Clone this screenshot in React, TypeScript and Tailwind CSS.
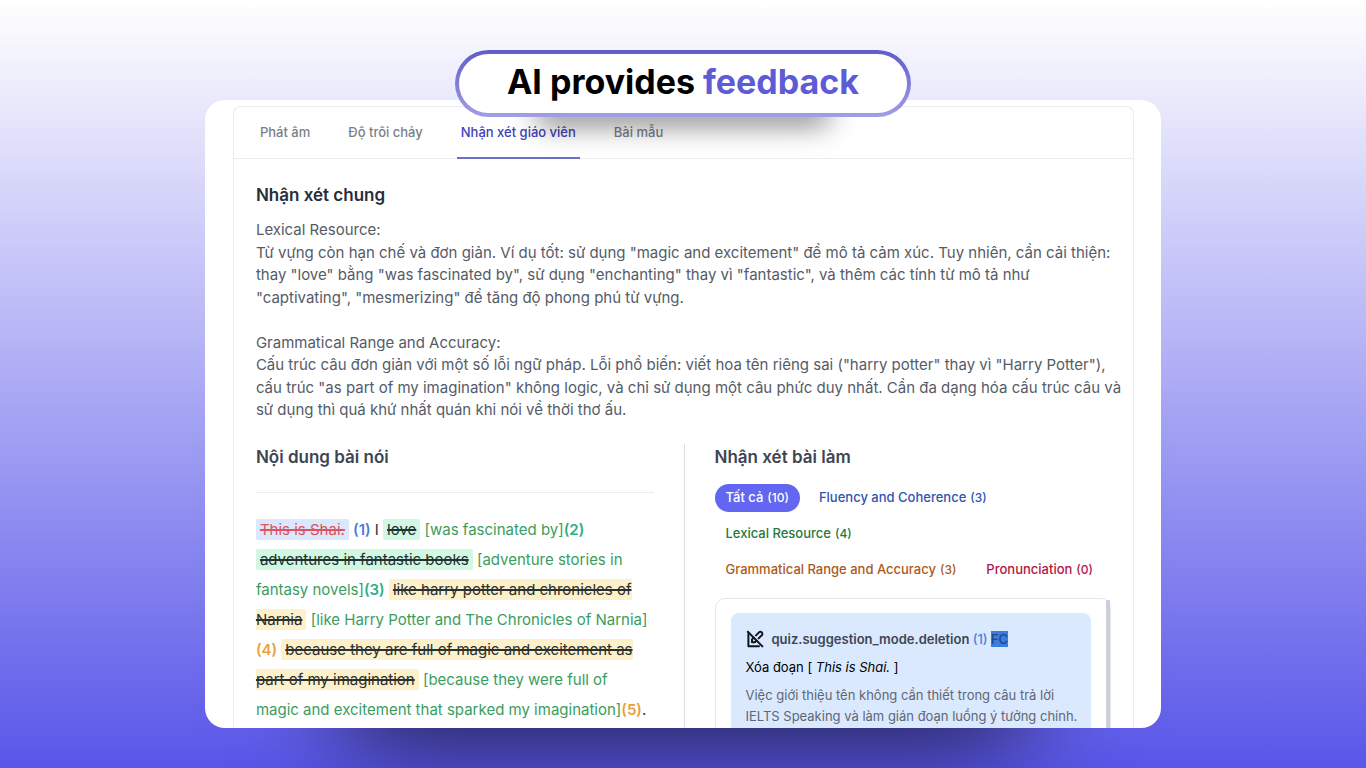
import React, { useState } from "react";

const TABS = ["Phát âm", "Độ trôi chảy", "Nhận xét giáo viên", "Bài mẫu"];

const FILTERS = [
  { id: "all", label: "Tất cả", count: 10, color: "text-[#4b5563]" },
  { id: "fc", label: "Fluency and Coherence", count: 3, color: "text-[#2f55ae]" },
  { id: "lr", label: "Lexical Resource", count: 4, color: "text-[#257a41]" },
  { id: "gra", label: "Grammatical Range and Accuracy", count: 3, color: "text-[#ab5a1e]" },
  { id: "p", label: "Pronunciation", count: 0, color: "text-[#b31745]" },
];

function EditOffIcon() {
  return (
    <svg
      viewBox="0 0 18 18"
      className="w-[18px] h-[18px] shrink-0 text-[#11151c]"
      fill="none"
      stroke="currentColor"
      strokeWidth="2"
      strokeLinecap="round"
      strokeLinejoin="round"
      aria-hidden="true"
    >
      <path d="M2.4 4v12.2H13" />
      <path d="M1.8 1.8l14.6 14.6" />
      <path d="M7.6 7.6L6 9.4v2.8h2.8l1.8-1.6" />
      <path d="M10 5.4l3-3a1.9 1.9 0 0 1 2.8 2.8l-3.2 3.2" />
    </svg>
  );
}

function Tabs({ active, onChange }: { active: string; onChange: (t: string) => void }) {
  return (
    <div role="tablist" className="flex gap-[30px] px-[22px] h-[52px] shrink-0 border-b border-[#ebebf0]">
      {TABS.map((tab) => (
        <button
          key={tab}
          role="tab"
          aria-selected={tab === active}
          onClick={() => onChange(tab)}
          className={
            tab === active
              ? "px-1 pt-0.5 -mb-px border-b-2 border-[#6d6fc4] text-[13px] font-medium text-[#4340b8]"
              : "px-1 pt-0.5 -mb-px border-b-2 border-transparent text-[13px] font-medium text-[#7b7f88]"
          }
        >
          {tab}
        </button>
      ))}
    </div>
  );
}

/* Trecho original riscado */
function Del({ tone, children }: { tone: "blue" | "green" | "amber"; children: React.ReactNode }) {
  const tones = {
    blue: "bg-[#dbe7fd] text-[#e0525c]",
    green: "bg-[#d2f8e3] text-[#22312f]",
    amber: "bg-[#fcf1cb] text-[#2b2f2e]",
  };
  return <del className={`px-1 py-px rounded-xs line-through decoration-2 ${tones[tone]}`}>{children}</del>;
}

function Ins({ children }: { children: React.ReactNode }) {
  return <ins className="no-underline text-[#3a9d5d]">{children}</ins>;
}

function Transcript() {
  return (
    <p className="text-[15px] leading-[30px] text-[#2b3240]">
      <Del tone="blue">This is Shai.</Del> <span className="font-semibold text-[#4a7fdc]">(1)</span> I{" "}
      <Del tone="green">love</Del> <Ins>[was fascinated by]</Ins>
      <span className="font-semibold text-[#2fae84]">(2)</span>{" "}
      <Del tone="green">adventures in fantastic books</Del>{" "}
      <Ins>[adventure stories in fantasy novels]</Ins>
      <span className="font-semibold text-[#2fae84]">(3)</span>{" "}
      <Del tone="amber">like harry potter and chronicles of Narnia</Del>{" "}
      <Ins>[like Harry Potter and The Chronicles of Narnia]</Ins>
      <wbr />
      <span className="font-semibold text-[#e9a03b]">(4)</span>{" "}
      <Del tone="amber">because they are full of magic and excitement as part of my imagination</Del>{" "}
      <Ins>[because they were full of magic and excitement that sparked my imagination]</Ins>
      <span className="font-semibold text-[#e9a03b]">(5)</span>.
    </p>
  );
}

export default function App() {
  const [tab, setTab] = useState("Nhận xét giáo viên");
  const [filter, setFilter] = useState("all");

  return (
    <div className="h-screen overflow-hidden flex flex-col items-center pt-[50px] pb-10 bg-linear-to-b/srgb from-white to-[#5956e9] font-['Inter',sans-serif]">
      {/* TÍTULO */}
      <div className="relative z-10 shrink-0 -mb-[17px]">
        <div className="absolute inset-x-20 -bottom-2 h-6 rounded-full bg-black/50 blur-[14px]" />
        <div className="relative p-1 rounded-full bg-linear-to-b/srgb from-[#5f5cca] to-[#a29ee6]">
          <h1 className="h-[59px] px-12 pb-1 flex items-center rounded-full bg-white text-[34px] font-bold text-black whitespace-pre">
            AI provides <span className="text-[#5e5bd6]">feedback</span>
          </h1>
        </div>
      </div>

      <main className="w-[70%] flex-1 min-h-0 rounded-[20px] bg-white shadow-[0_150px_100px_-140px_rgba(0,0,0,0.75)]">
        <div className="h-full overflow-hidden rounded-[20px] pl-7 pr-[27px] pt-[6px]">
          <div className="rounded-t-lg border border-b-0 border-[#ebebf0]">
            <Tabs active={tab} onChange={setTab} />

            <div className="px-[22px] pt-6">
              <h2 className="text-[17px] leading-6 font-semibold text-[#262d3b]">Nhận xét chung</h2>
              <div className="mt-3 -mr-3 text-[15px] leading-normal text-[#555b67]">
                <p>Lexical Resource:</p>
                <p>
                  Từ vựng còn hạn chế và đơn giản. Ví dụ tốt: sử dụng "magic and excitement" để mô tả cảm xúc. Tuy
                  nhiên, cần cải thiện: thay "love" bằng "was fascinated by", sử dụng "enchanting" thay vì
                  "fantastic", và thêm các tính từ mô tả như
                  <br />
                  "captivating", "mesmerizing" để tăng độ phong phú từ vựng.
                </p>
                <br />
                <p>Grammatical Range and Accuracy:</p>
                <p>
                  Cấu trúc câu đơn giản với một số lỗi ngữ pháp. Lỗi phổ biến: viết hoa tên riêng sai ("harry potter"
                  thay vì "Harry Potter"), cấu trúc "as part of my imagination" không logic, và chỉ sử dụng một câu
                  phức duy nhất. Cần đa dạng hóa cấu trúc câu và sử dụng thì quá khứ nhất quán khi nói về thời thơ ấu.
                </p>
              </div>

              <div className="mt-[22px] grid grid-cols-2">
                {/* NỘI DUNG BÀI NÓI */}
                <section className="pr-[30px]">
                  <h2 className="text-[17px] leading-[26px] font-semibold text-[#3d4452]">Nội dung bài nói</h2>
                  <hr className="mt-[22px] mb-[22px] border-[#ececef]" />
                  <Transcript />
                </section>

                {/* NHẬN XÉT BÀI LÀM */}
                <section className="pl-[30px] border-l border-[#dcdde2]">
                  <h2 className="text-[17px] leading-[26px] font-semibold text-[#3d4452]">Nhận xét bài làm</h2>
                  <div className="mt-[14px] flex flex-wrap gap-x-2 gap-y-2">
                    {FILTERS.map((f) => (
                      <button
                        key={f.id}
                        onClick={() => setFilter(f.id)}
                        className={`h-7 px-[11px] rounded-full flex items-center gap-1 text-[13px] font-medium ${
                          f.id === filter ? "bg-[#6366f1] text-white" : f.color
                        }`}
                      >
                        {f.label}
                        <span className="text-xs">({f.count})</span>
                      </button>
                    ))}
                  </div>

                  <div className="mt-[14px] h-[420px] flex justify-between rounded-[10px] border border-[#e6e7ec]">
                    <article className="flex-1 mx-[15px] mt-[14px] pl-[15px] pr-2 pt-4 rounded-lg bg-[#dbe9fe]">
                      <h3 className="flex items-center gap-2 text-[13px] leading-5 font-semibold text-[#3d4654]">
                        <EditOffIcon />
                        <span>
                          quiz.suggestion_mode.deletion <span className="font-medium text-[#4a7fdc]">(1)</span>{" "}
                          <span className="bg-[#3b7ddd] font-medium text-[#1f4588]">FC</span>
                        </span>
                      </h3>
                      <p className="mt-2 text-[13px] leading-5 text-black">
                        Xóa đoạn [ <em>This is Shai.</em> ]
                      </p>
                      <p className="mt-2 text-[13px] leading-[21px] text-[#5d6775]">
                        Việc giới thiệu tên không cần thiết trong câu trả lời IELTS Speaking và làm gián đoạn luồng ý
                        tưởng chính.
                      </p>
                    </article>
                    <div className="w-1 mt-px bg-[#cbd0dc]" />
                  </div>
                </section>
              </div>
            </div>
          </div>
        </div>
      </main>
    </div>
  );
}
